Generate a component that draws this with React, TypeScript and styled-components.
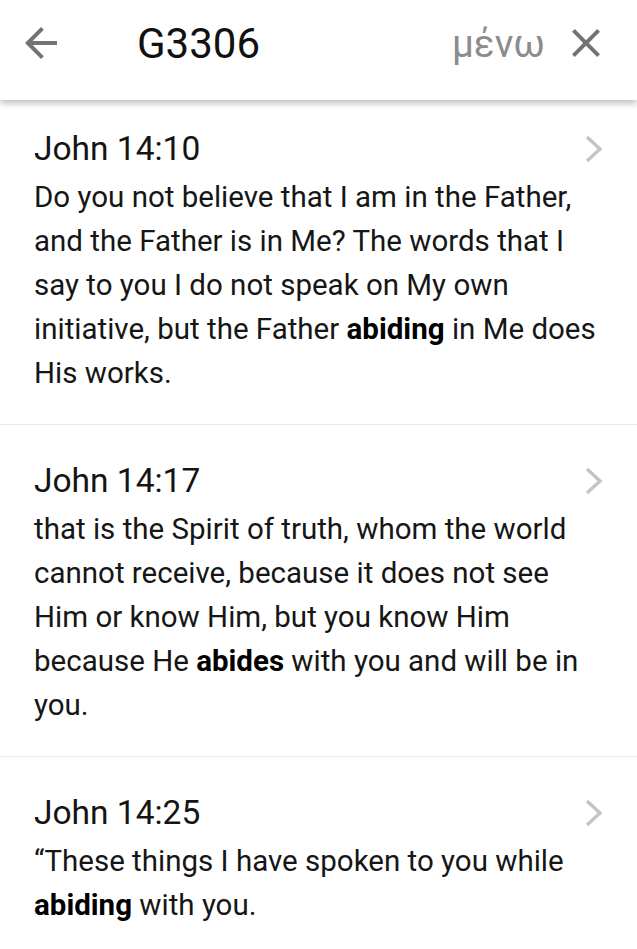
import React from "react";
import styled, { createGlobalStyle } from "styled-components";

const Global = createGlobalStyle`
  html, body { margin: 0; padding: 0; background: #ffffff; }
  body { font-family: Roboto, "Noto Sans", "Liberation Sans", sans-serif; }
  * { box-sizing: border-box; }
`;

const Page = styled.div`
  width: 637px;
  min-height: 949px;
  background: #ffffff;
  overflow: hidden;
`;

const Header = styled.header`
  position: relative;
  z-index: 2;
  height: 100px;
  display: flex;
  align-items: center;
  padding: 0 27px 14px 17px;
  background: #ffffff;
  box-shadow: 0 3px 7px rgba(0, 0, 0, 0.28);
`;

const IconButton = styled.button`
  width: 48px;
  height: 48px;
  padding: 0;
  border: none;
  background: none;
  display: flex;
  align-items: center;
  justify-content: center;
  color: #737373;
  flex: none;
`;

const Title = styled.h1`
  margin: 0 0 0 72px;
  font-family: Roboto, "Noto Sans", sans-serif;
  font-weight: 400;
  font-size: 42px;
  color: #111111;
  flex: 1;
`;

const Lemma = styled.span`
  font-family: Roboto, "Noto Sans", sans-serif;
  font-size: 38.5px;
  color: #8c8c8c;
  margin-right: 17px;
`;

const List = styled.main`
  display: flex;
  flex-direction: column;
`;

const Item = styled.article<{ $first?: boolean }>`
  padding: ${(p) => (p.$first ? "24px" : "31px")} 0 29px 34px;
  border-top: ${(p) => (p.$first ? "none" : "1px solid #e9e9e9")};
`;

const ItemHead = styled.div`
  display: flex;
  align-items: center;
  justify-content: space-between;
  padding-right: 34px;
`;

const Ref = styled.h2`
  margin: 0;
  font-family: Roboto, sans-serif;
  font-weight: 400;
  font-size: 33.5px;
  line-height: 50px;
  color: #141414;
`;

const Verse = styled.p`
  margin: 1px 0 0;
  padding-right: 37px;
  font-family: Roboto, sans-serif;
  font-size: 29.5px;
  line-height: 44px;
  color: #161616;
  b { font-weight: 700; color: #000; }
`;

const BackIcon = () => (
  <svg width="48" height="48" viewBox="0 0 24 24" fill="currentColor">
    <path d="M20 11H7.83l5.59-5.59L12 4l-8 8 8 8 1.41-1.41L7.83 13H20v-2z" />
  </svg>
);

const CloseIcon = () => (
  <svg width="48" height="48" viewBox="0 0 24 24" fill="currentColor">
    <path d="M19 6.41L17.59 5 12 10.59 6.41 5 5 6.41 10.59 12 5 17.59 6.41 19 12 13.41 17.59 19 19 17.59 13.41 12z" />
  </svg>
);

const Chevron = () => (
  <svg width="18" height="28" viewBox="0 0 18 28" fill="none">
    <polyline points="2,2 15,14 2,26" stroke="#c4c4c4" strokeWidth="3.4" strokeLinejoin="miter" />
  </svg>
);

const verses: { ref: string; text: React.ReactNode }[] = [
  {
    ref: "John 14:10",
    text: (
      <>
        Do you not believe that I am in the Father, and the Father is in Me? The words that I say to you I do not speak on My own initiative, but the Father <b>abiding</b> in Me does His works.
      </>
    ),
  },
  {
    ref: "John 14:17",
    text: (
      <>
        that is the Spirit of truth, whom the world cannot receive, because it does not see Him or know Him, but you know Him because He <b>abides</b> with you and will be in you.
      </>
    ),
  },
  {
    ref: "John 14:25",
    text: (
      <>
        “These things I have spoken to you while <b>abiding</b> with you.
      </>
    ),
  },
];

export default function App() {
  return (
    <Page>
      <Global />
      <Header>
        <IconButton aria-label="Back">
          <BackIcon />
        </IconButton>
        <Title>G3306</Title>
        <Lemma>μένω</Lemma>
        <IconButton aria-label="Close">
          <CloseIcon />
        </IconButton>
      </Header>
      <List>
        {verses.map((v, i) => (
          <Item key={v.ref} $first={i === 0}>
            <ItemHead>
              <Ref>{v.ref}</Ref>
              <Chevron />
            </ItemHead>
            <Verse>{v.text}</Verse>
          </Item>
        ))}
      </List>
    </Page>
  );
}
